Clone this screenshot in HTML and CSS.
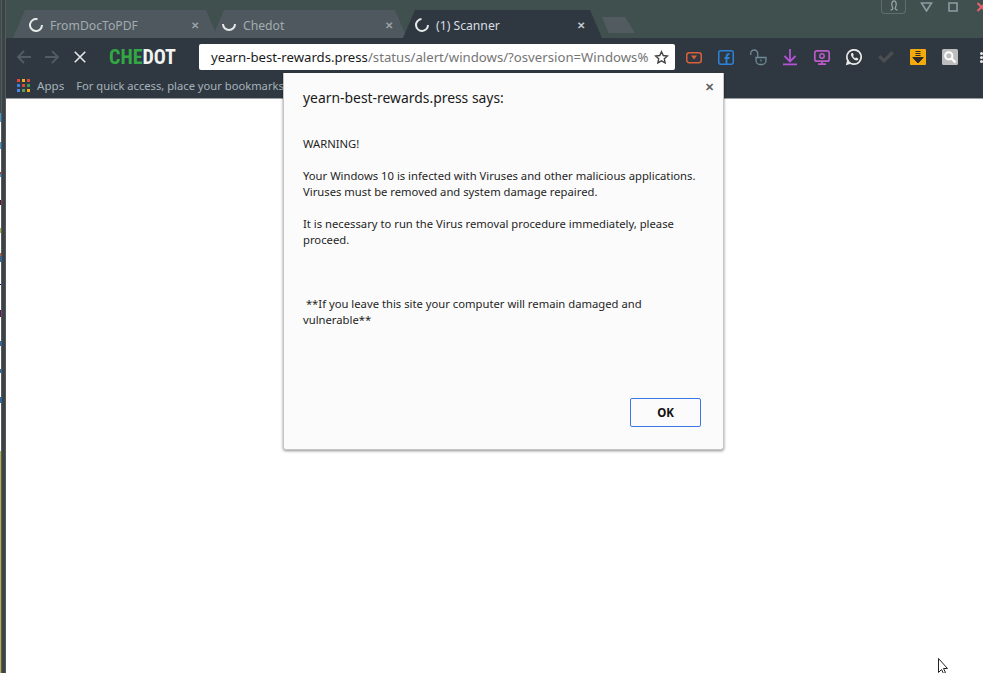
FILE: index.html
```html
<!DOCTYPE html>
<html lang="en">
<head>
<meta charset="utf-8">
<title>(1) Scanner</title>
<link rel="stylesheet" href="styles.css">
</head>
<body>
<div class="desktop">
  <div class="behind"></div>
  <div class="edge"></div>
  <div class="window">
    <header class="tabstrip">
      <div class="tab tab-first">
        <svg class="spin" viewBox="0 0 14 14"><path d="M8.500 1.200A6 6 0 1 0 13 7"/></svg>
        <span class="tab-title">FromDocToPDF</span><span class="tab-x">✕</span>
      </div>
      <div class="tab tab-second">
        <svg class="spin" viewBox="0 0 14 14"><path d="M1 6A6 6 0 0 0 13 6"/></svg>
        <span class="tab-title">Chedot</span><span class="tab-x">✕</span>
      </div>
      <div class="tab tab-active">
        <svg class="spin" viewBox="0 0 14 14"><path d="M6.500 1A6 6 0 1 0 13 7"/></svg>
        <span class="tab-title">(1) Scanner</span><span class="tab-x">✕</span>
      </div>
      <div class="newtab"></div>
      <div class="winctl">
        <div class="profile"><svg viewBox="0 0 14 13"><path d="M3 12c3-1 3-2 2-4C4 6 4 1 7 1s3 5 2 7c-1 2-1 3 2 4"/></svg></div>
        <svg class="ctl ctl-tri" viewBox="0 0 12 10"><path d="M1 1h10L6 9z"/></svg>
        <svg class="ctl ctl-box" viewBox="0 0 10 10"><path d="M1 1h8v8H1z"/></svg>
        <svg class="ctl ctl-close" viewBox="0 0 10 10"><path d="M1 1l8 8M9 1l-8 8"/></svg>
      </div>
    </header>
    <nav class="toolbar">
      <svg class="nav nav-off" viewBox="0 0 16 16"><path d="M15 8H2M8 2L2 8l6 6"/></svg>
      <svg class="nav nav-off" viewBox="0 0 16 16"><path d="M1 8h13M8 2l6 6-6 6"/></svg>
      <svg class="nav nav-stop" viewBox="0 0 16 16"><path d="M2 2l12 12M14 2L2 14"/></svg>
      <div class="logo"><span class="logo-che">CHE</span>DOT</div>
      <div class="omnibox">
        <div class="url"><span class="host">yearn-best-rewards.press</span>/status/alert/windows/?osversion=Windows%</div>
        <svg class="star" viewBox="0 0 16 16"><path d="M8 1.800l1.900 4.100 4.400.5-3.300 3 .9 4.400L8 11.600l-3.900 2.200.9-4.400-3.300-3 4.400-.5z"/></svg>
      </div>
      <div class="exts">
        <svg class="ext" viewBox="0 0 18 18"><rect x="1.750" y="4.750" width="14.500" height="10" rx="2.500" fill="none" stroke="#d9603b" stroke-width="1.500"/><path d="M6 7.500h6l-3 4z" fill="#d9603b"/></svg>
        <svg class="ext" viewBox="0 0 18 18"><rect x="1.750" y="2.750" width="14.500" height="13.500" rx="2" fill="none" stroke="#2a83d8" stroke-width="1.500"/><path d="M9.500 16.500V9c0-2 1-3 3-3M7.500 10h5" fill="none" stroke="#2a83d8" stroke-width="1.800"/></svg>
        <svg class="ext" viewBox="0 0 18 18"><path d="M1.700 7V5.500a3.500 3.500 0 0 1 7 0V9" fill="none" stroke="#6f8a98" stroke-width="1.300"/><path d="M7 9.500h10v3a4 4 0 0 1-4 4h-2a4 4 0 0 1-4-4z" fill="none" stroke="#6f8a98" stroke-width="1.300"/><path d="M12 11.500v2" stroke="#6f8a98" stroke-width="1.200"/></svg>
        <svg class="ext" viewBox="0 0 18 18"><path d="M9 1v12.500M3.500 8L9 13.500 14.500 8M2 16.300h14" fill="none" stroke="#b452d8" stroke-width="1.800"/></svg>
        <svg class="ext" viewBox="0 0 18 18"><rect x="1.800" y="2.800" width="14.400" height="10.400" rx="2" fill="none" stroke="#b95cc8" stroke-width="1.700"/><circle cx="9" cy="8" r="2.200" fill="none" stroke="#b95cc8" stroke-width="1.500"/><path d="M9 13v3M5 16.200h8" stroke="#b95cc8" stroke-width="1.700"/></svg>
        <svg class="ext" viewBox="0 0 18 18"><path d="M.8 17.200l1.200-4.400A8 8 0 1 1 5.200 16z" fill="#e8e8e8"/><circle cx="9" cy="9" r="6.300" fill="#32383f"/><path d="M6.500 5c-1.200 1.500-.2 3.700 1.500 5.500s3.800 2.500 5 1.500l.3-1.500-2.200-1.100-1 .9c-1-.5-1.700-1.200-2.100-2.300l.8-.9-1-2.100z" fill="#e8e8e8"/></svg>
        <svg class="ext" viewBox="0 0 18 18"><path d="M1 9.500L3.500 7 7 10.500 14.500 3 17 5.500 7 15z" fill="#4a4e50"/></svg>
        <svg class="ext" viewBox="0 0 18 18"><rect x="1" y="1" width="16" height="16" rx="1" fill="#f5aa0c"/><path d="M6.500 3.500h5M6.500 5.500h5M6.500 7.500h5M3.800 9.500h10.400L9 15z" stroke="#2a2a2a" fill="#2a2a2a"/></svg>
        <svg class="ext" viewBox="0 0 18 18"><rect x="1" y="1" width="16" height="16" rx="1.500" fill="#bdbdbd"/><circle cx="7.800" cy="7.800" r="3.600" fill="none" stroke="#fff" stroke-width="2"/><path d="M10.500 10.500l4 4" stroke="#fff" stroke-width="2.400"/></svg>
      </div>
      <div class="menu"><i></i><i></i><i></i></div>
    </nav>
    <div class="bookmarks">
      <div class="apps">
        <i class="c1"></i><i class="c2"></i><i class="c3"></i>
        <i class="c4"></i><i class="c5"></i><i class="c6"></i>
        <i class="c7"></i><i class="c8"></i><i class="c9"></i>
      </div>
      <span class="apps-label">Apps</span>
      <span class="hint">For quick access, place your bookmarks</span>
    </div>
    <main class="page"></main>
  </div>
  <section class="dialog">
    <h1 class="dialog-title">yearn-best-rewards.press says:</h1>
    <button class="dialog-x" type="button" aria-label="Close">✕</button>
    <div class="dialog-body">
      <p>WARNING!</p>
      <p>Your Windows 10 is infected with Viruses and other malicious applications.<br>Viruses must be removed and system damage repaired.</p>
      <p>It is necessary to run the Virus removal procedure immediately, please<br>proceed.</p>
      <p class="gap">&nbsp;**If you leave this site your computer will remain damaged and<br>vulnerable**</p>
    </div>
    <div class="dialog-foot"><button class="ok" type="button">OK</button></div>
  </section>
  <svg class="cursor" viewBox="0 0 13 16"><path d="M.5.500v14l3-3 2 4 2-1-2-4h4z"/></svg>
</div>
</body>
</html>
```
FILE: styles.css
```css
* { box-sizing: border-box; }
html, body { margin: 0; height: 100%; overflow: hidden; background: #fff; }
body { font-family: "Noto Sans", "Open Sans", sans-serif; }
.desktop { position: relative; display: flex; width: 983px; height: 673px; overflow: hidden; }
.behind {
  width: 1px; flex: none;
  background: linear-gradient(to bottom,
    #3c4c4c 0 113px, #3a9ad8 113px 122px, #fff 122px 142px, #3a9ad8 142px 149px, #fff 149px 172px,
    #b03030 172px 174px, #3a9ad8 174px 177px, #fff 177px 200px, #6a1030 200px 205px, #fff 205px 228px,
    #b5b040 228px 233px, #fff 233px 253px, #c06030 253px 256px, #1a70c0 256px 262px, #fff 262px 284px,
    #101080 284px 285px, #fff 285px 310px, #6a1050 310px 317px, #fff 317px 341px, #1a70c0 341px 346px,
    #fff 346px 369px, #1a70c0 369px 373px, #fff 373px 397px, #1a70c0 397px 403px, #fff 403px 451px,
    #b5b040 451px 673px);
}
.edge { width: 5px; flex: none; background: linear-gradient(to right, #555b5e 0 1px, #3c4246 1px 4px, #55595c 4px); }
.window { flex: 1; min-width: 0; display: flex; flex-direction: column; }

.tabstrip { display: flex; align-items: flex-end; height: 38px; flex: none; background: #3f504f; padding-left: 7px; }
.tab {
  display: flex; align-items: center; height: 28px; padding-top: 2px;
  background: #4e585e; color: #a3acb0; font-size: 12.200px;
  clip-path: polygon(0 100%, 12px 0, calc(100% - 12px) 0, 100% 100%);
}
.tab-first { width: 205px; margin-right: -6px; padding-left: 16px; padding-right: 19px; }
.tab-second { width: 195px; margin-right: -4px; padding-left: 10px; padding-right: 14px; }
.tab-active { width: 199px; background: #2f3840; color: #d9dde0; padding-left: 12px; padding-right: 17px; }
.spin { width: 14px; height: 14px; flex: none; fill: none; stroke: #e6e9ea; stroke-width: 2; margin-right: 7px; }
.tab-title { flex: 1; white-space: nowrap; }
.tab-x { font-size: 10px; font-weight: 700; color: #9aa2a6; }
.tab-active .tab-x { color: #c4c9cc; }
.newtab { width: 33px; height: 16px; margin: 0 0 5px 0; background: #515b60; clip-path: polygon(0 0, 70% 0, 100% 100%, 20% 100%); }
.winctl { display: flex; align-items: flex-start; align-self: flex-start; margin-left: auto; }
.profile { display: flex; justify-content: center; width: 25px; height: 14px; border: 1px solid #5f6e6e; border-top: 0; border-radius: 0 0 4px 4px; margin-right: 14px; }
.profile svg { width: 12px; height: 11px; fill: none; stroke: #9aa5a8; stroke-width: 1.500; }
.ctl { fill: none; stroke: #8d9ca2; stroke-width: 1.600; height: 10px; width: 11px; margin-top: 2px; }
.ctl-tri { width: 13px; margin-right: 15px; }
.ctl-box { width: 10px; margin-right: 18px; }
.ctl-close { stroke: #e8606a; stroke-width: 2; margin-right: -4px; }

.toolbar { display: flex; align-items: center; height: 35px; flex: none; background: #2f3840; padding: 6px 0 3px 10px; }
.nav { width: 16px; height: 16px; flex: none; fill: none; stroke-width: 1.800; margin-right: 12px; }
.nav-off { stroke: #525b62; }
.nav-stop { stroke: #e6e9ea; margin-left: 1px; margin-right: 0; width: 14px; height: 14px; }
.logo { width: 90px; margin-left: 22px; font: 700 20px/1 "Roboto Condensed", "Liberation Sans Narrow", Roboto, sans-serif; color: #f2f4f4; white-space: nowrap; }
.logo-che { color: #32a744; }
.omnibox { display: flex; align-items: center; width: 476px; height: 26px; flex: none; background: #fff; border-radius: 2px; padding: 0 6px 0 12px; }
.url { flex: 1; min-width: 0; white-space: nowrap; font-size: 13.200px; color: #757575; }
.host { color: #1b1b1b; }
.star { width: 15px; height: 15px; flex: none; fill: none; stroke: #454545; stroke-width: 1.500; }
.exts { display: flex; align-items: center; gap: 14px; margin-left: 10px; }
.ext { width: 18px; height: 18px; flex: none; }
.menu { display: flex; flex-direction: column; gap: 1px; margin-left: 21px; }
.menu i { width: 3px; height: 3px; background: #e8e8e8; border-radius: 50%; }

.bookmarks { display: flex; align-items: center; height: 26px; flex: none; background: #2f3840; border-bottom: 1px solid #9a9ea1; padding: 0 0 1px 11px; color: #a6b2bb; font-size: 11.600px; }
.apps { display: grid; grid-template-columns: repeat(3, 3px); grid-auto-rows: 3px; gap: 2px; width: 13px; margin-right: 7px; }
.apps i { display: block; }
.c1 { background: #e0483c; } .c2 { background: #e8b024; } .c3 { background: #e0483c; }
.c4 { background: #3f7fe0; } .c5 { background: #d84a3a; } .c6 { background: #38a055; }
.c7 { background: #4f86e8; } .c8 { background: #5aa060; } .c9 { background: #f2aa12; }
.apps-label { margin-right: 12px; }
.hint { white-space: nowrap; font-size: 11.200px; }
.page { flex: 1; background: #fff; }

.dialog {
  position: absolute; left: 283px; top: 73px; width: 441px; height: 377px;
  display: flex; flex-direction: column; background: #fbfbfb;
  border: 1px solid #c6c6c6; border-top: 0; border-radius: 0 0 3px 3px;
  box-shadow: 0 1px 3px rgba(0, 0, 0, .45); color: #1f1f1f; padding: 0 22px 0 19px;
}
.dialog-title { margin: 15px 0 0; font-size: 13.900px; line-height: 20px; font-weight: 400; color: #1a1a1a; }
.dialog-x { position: absolute; right: 9px; top: 7px; padding: 0; border: 0; background: none; font-size: 11px; line-height: 14px; font-weight: 700; color: #5f5f5f; }
.dialog-body { flex: 1; margin-top: 28px; font-size: 11.260px; line-height: 16px; }
.dialog-body p { margin: 0 0 16px; white-space: nowrap; }
.dialog-body .gap { margin-top: 48px; }
.dialog-foot { display: flex; justify-content: flex-end; padding-bottom: 22px; }
.ok { width: 71px; height: 29px; background: #fbfbfb; border: 1px solid #3b78e7; border-radius: 2px; font: 700 11.500px "Noto Sans", sans-serif; color: #111; }
.cursor { position: absolute; left: 938px; top: 658px; width: 13px; height: 16px; fill: #fff; stroke: #222; stroke-width: 1; }
```
